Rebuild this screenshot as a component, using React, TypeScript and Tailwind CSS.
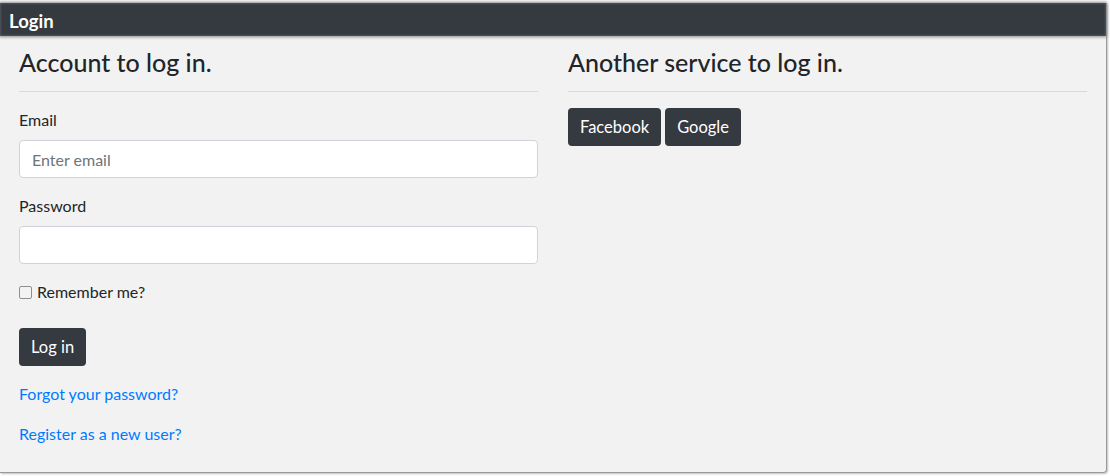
import React from "react";

function Heading({ children }: { children: React.ReactNode }) {
  return (
    <>
      <h4 className="mt-[12px] text-[25px] leading-[29px] font-medium text-[#212529]">{children}</h4>
      <hr className="mt-[14px] mb-4 border-0 border-t border-[rgba(0,0,0,0.1)]" />
    </>
  );
}

const btn = "h-[38px] px-3 bg-[#343a40] text-white rounded-[4px] leading-6 text-[16.5px]";

export default function App() {
  return (
    <div className="w-[1110px] h-[476px] bg-white pt-[3px] font-['Lato',sans-serif] text-[16px] text-[#212529]">
      <div className="w-[1107px] bg-[#f2f2f2] border-r border-b border-[#9a9a9a] rounded-br-[4px] shadow-[1px_1px_2px_rgba(0,0,0,0.25)]">
        <div className="h-[33px] bg-[#343a40] flex items-center pt-[4px] px-[9px] text-white font-bold text-[18.5px] shadow-[0_0_3px_1px_#8a8a8a,inset_0_0_3px_#6a6e73]">
          Login
        </div>
        <div className="grid grid-cols-2 px-[4px] pb-[26px]">
          <div className="px-[15px]">
            <Heading>Account to log in.</Heading>
            <form>
              <div className="mb-4">
                <label className="block leading-6 mb-2">Email</label>
                <input
                  type="email"
                  placeholder="Enter email"
                  className="block w-full h-[38px] px-3 bg-white border border-[#ced4da] rounded-[4px] text-[16px] text-[#495057] placeholder:text-[#6c757d] outline-none"
                />
              </div>
              <div className="mb-4">
                <label className="block leading-6 mb-2">Password</label>
                <input
                  type="password"
                  className="block w-full h-[38px] px-3 bg-white border border-[#ced4da] rounded-[4px] text-[16px] outline-none"
                />
              </div>
              <div className="mb-6 flex items-center h-6 gap-[5px]">
                <input
                  type="checkbox"
                  className="appearance-none w-[13px] h-[13px] border border-[#8f8f8f] rounded-[2px] bg-[#f3f3f3]"
                />
                <label>Remember me?</label>
              </div>
              <button type="button" className={btn}>
                Log in
              </button>
              <p className="mt-4 mb-4 leading-6">
                <a className="text-[#007bff]">Forgot your password?</a>
              </p>
              <p className="leading-6">
                <a className="text-[#007bff]">Register as a new user?</a>
              </p>
            </form>
          </div>
          <div className="px-[15px]">
            <Heading>Another service to log in.</Heading>
            <div className="flex gap-1">
              <button type="button" className={btn}>
                Facebook
              </button>
              <button type="button" className={btn}>
                Google
              </button>
            </div>
          </div>
        </div>
      </div>
    </div>
  );
}
